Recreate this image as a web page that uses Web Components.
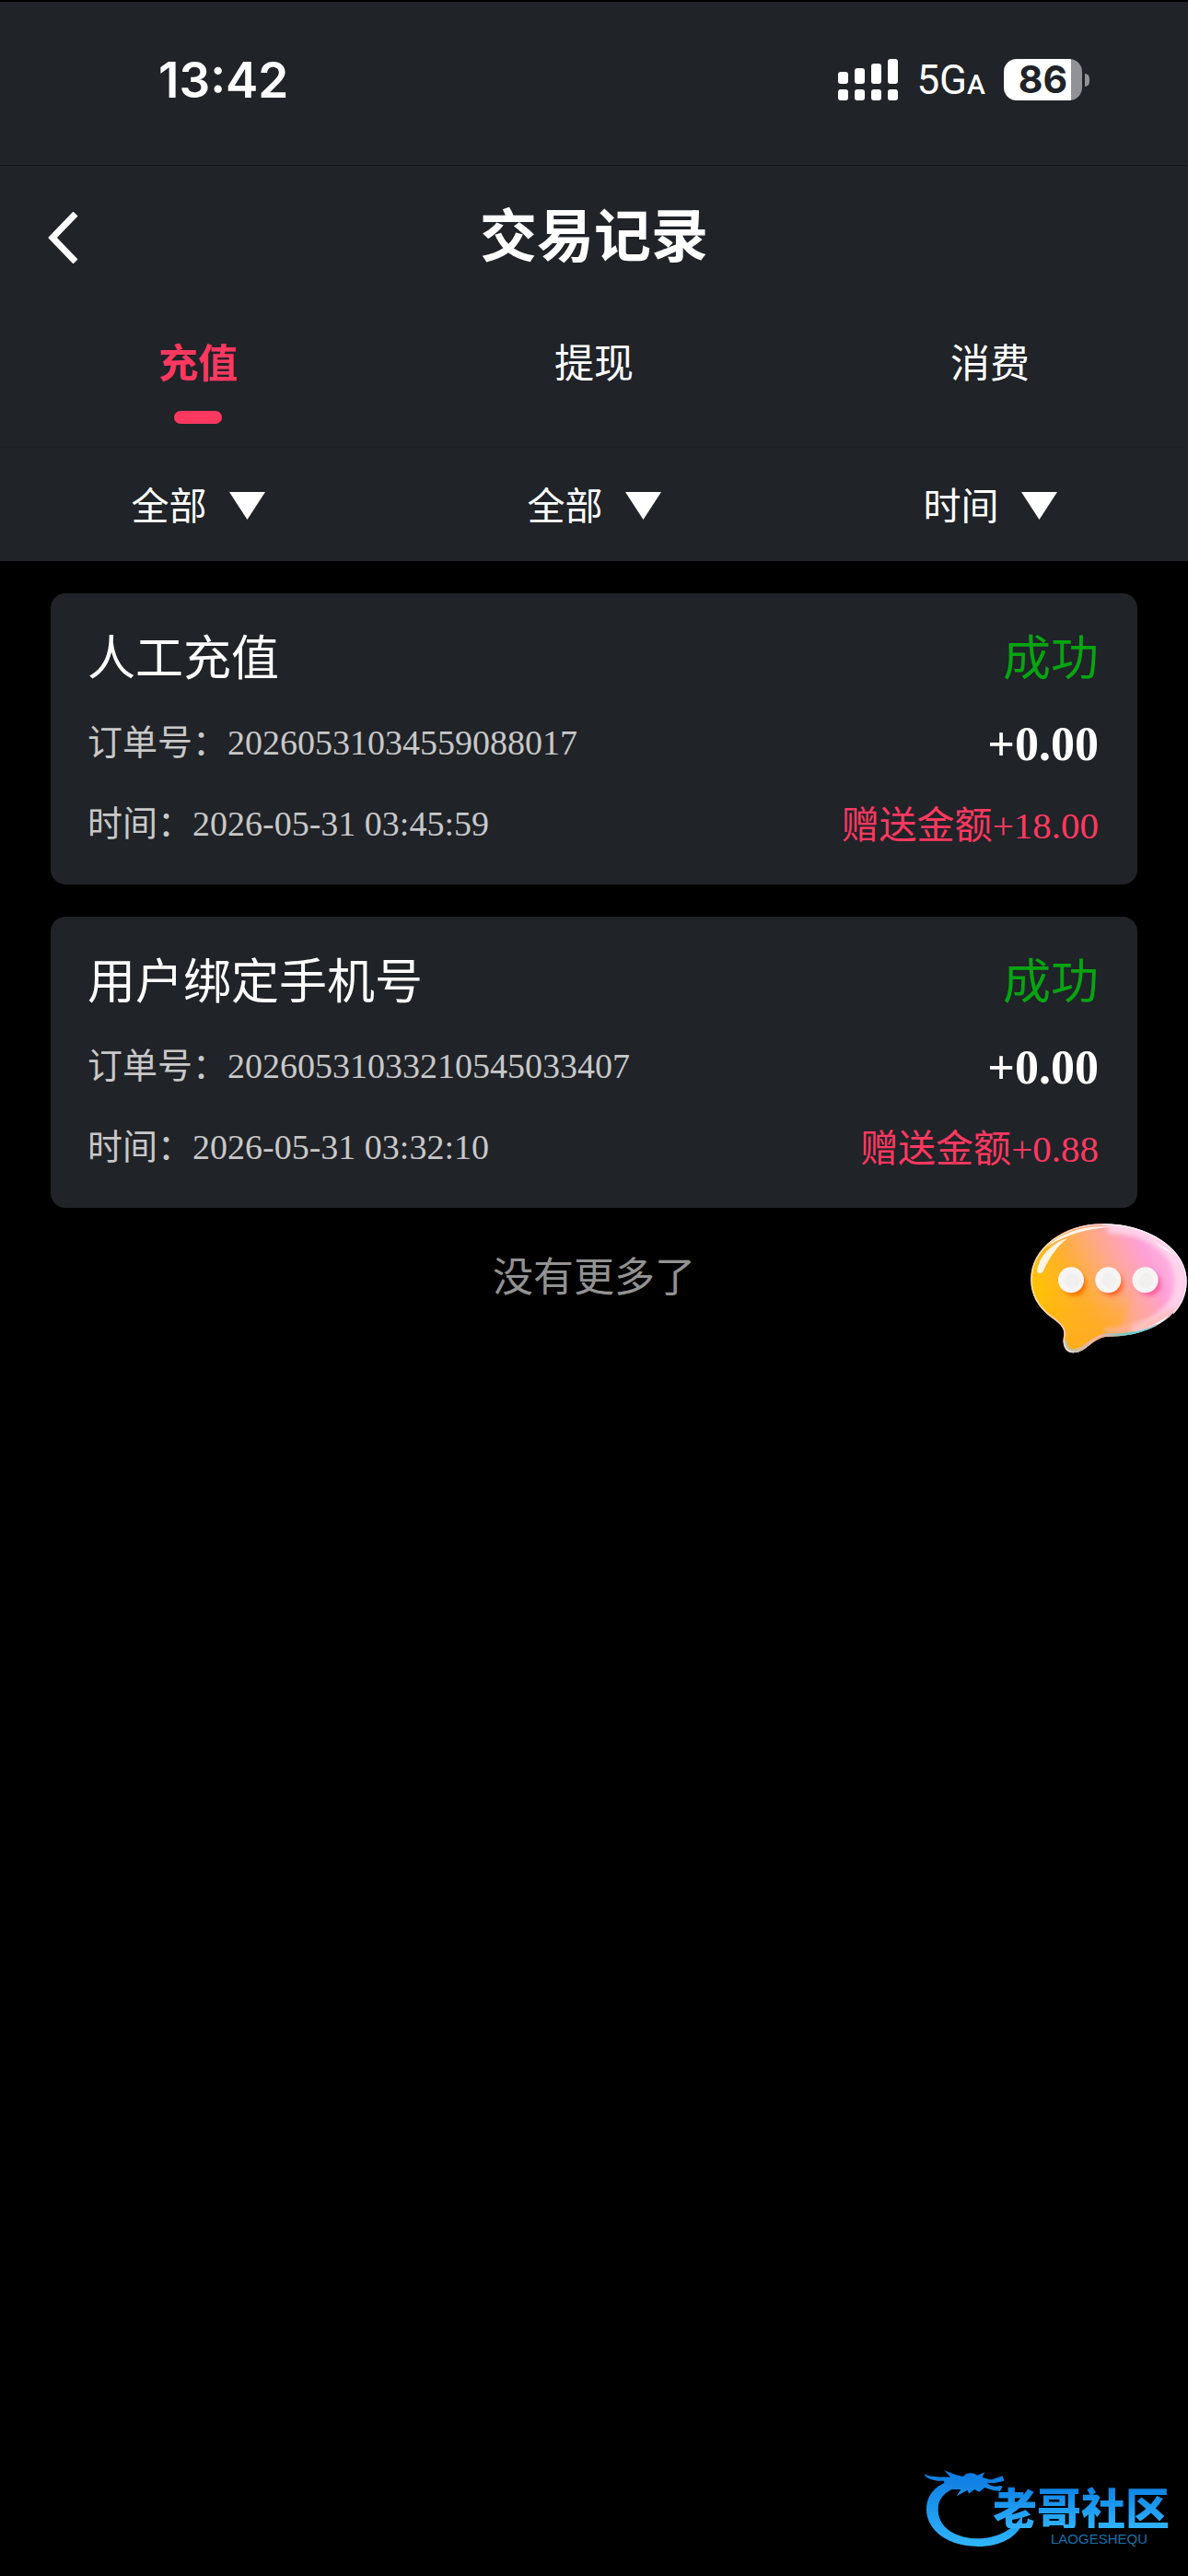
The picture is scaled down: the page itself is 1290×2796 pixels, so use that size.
<!DOCTYPE html>
<html lang="zh-CN">
<head>
<meta charset="utf-8">
<meta name="viewport" content="width=device-width, initial-scale=1">
<title>交易记录</title>
<style>
html, body {
    margin: 0;
    min-height: 100%;
    background: #000;
}
body {
    --panel: #202328;
    --accent: #ff3860;
    --success: #06a510;
    color: #fff;
    font-family: "Liberation Serif", "Noto Sans CJK SC", serif;
}
</style>
</head>
<body>

<record-page></record-page>

<script>
function define(name, html, setup) {
    const template = document.createElement("template")
    template.innerHTML = html

    customElements.define(name, class extends HTMLElement {
        constructor() {
            super()
            this.attachShadow({ mode: "open" }).append(template.content.cloneNode(true))
        }
        connectedCallback() {
            if (setup) setup(this, this.shadowRoot)
        }
    })
}

define("status-bar", /*html*/`
<style>
:host {
    display: flex;
    justify-content: space-between;
    align-items: center;
    box-sizing: border-box;
    height: 180px;
    padding: 0 107px 8px 172px;
    border-top: 2px solid #000;
    border-bottom: 1px solid #15171b;
    background: var(--panel);
    font-family: Inter, sans-serif;
}
time { font-size: 53px; font-weight: 600; }
.right { display: flex; align-items: center; }
.signal { width: 65px; height: 45px; margin-right: 20px; }
.net {
    font-family: Roboto, sans-serif;
    font-size: 44px;
    margin-right: 20px;
}
.net small { font-size: 30px; font-weight: 500; }
.battery {
    display: flex;
    align-items: center;
    justify-content: center;
    width: 85px;
    height: 45px;
    border-radius: 14px;
    background: linear-gradient(to right, #fff 73px, #909296 73px);
    color: #202328;
    font-size: 41px;
    font-weight: 700;
    line-height: 45px;
}
.nub {
    width: 5px;
    height: 14px;
    margin-left: 3px;
    border-radius: 0 7px 7px 0;
    background: #909296;
}
</style>
<time>13:42</time>
<div class="right">
  <svg class="signal" viewBox="0 0 65 45" fill="#fff" aria-hidden="true">
    <rect x="0" y="14" width="11" height="13" rx="3"/>
    <rect x="18" y="10" width="11" height="17" rx="3"/>
    <rect x="36" y="5" width="11" height="22" rx="3"/>
    <rect x="54" y="0" width="11" height="27" rx="3"/>
    <rect x="0" y="33" width="11" height="12" rx="3"/>
    <rect x="18" y="33" width="11" height="12" rx="3"/>
    <rect x="36" y="33" width="11" height="12" rx="3"/>
    <rect x="54" y="33" width="11" height="12" rx="3"/>
  </svg>
  <span class="net">5G<small>A</small></span>
  <span class="battery">86</span><span class="nub"></span>
</div>
`)

define("page-header", /*html*/`
<style>
:host {
    display: grid;
    grid-template-columns: 1fr auto 1fr;
    align-items: center;
    box-sizing: border-box;
    height: 149px;
    padding: 0 52px 6px;
    background: var(--panel);
}
button {
    justify-self: start;
    display: flex;
    padding: 12px 0 0;
    border: 0;
    background: none;
    cursor: pointer;
}
svg { width: 33px; height: 56px; }
h1 {
    margin: 0;
    font-family: "Noto Sans CJK SC", sans-serif;
    font-size: 62px;
    line-height: 88px;
    font-weight: 700;
}
</style>
<button type="button" aria-label="返回">
  <svg viewBox="0 0 33 56" fill="none" stroke="#fff" stroke-width="7"><path d="M30 2L5 28L30 54"/></svg>
</button>
<h1><slot></slot></h1>
`)

define("tab-item", /*html*/`
<style>
:host { display: block; flex: 1; }
button {
    display: flex;
    flex-direction: column;
    align-items: center;
    width: 100%;
    height: 157px;
    padding: 30px 0 0;
    border: 0;
    background: none;
    color: #fff;
    font-family: "Noto Sans CJK SC", sans-serif;
    font-size: 43px;
    line-height: 64px;
    cursor: pointer;
}
:host([active]) button { color: var(--accent); font-weight: 700; }
:host([active]) button::after {
    content: "";
    width: 52px;
    height: 14px;
    margin-top: 23px;
    border-radius: 7px;
    background: var(--accent);
}
</style>
<button type="button" role="tab"><slot></slot></button>
`, (host, root) => {
    root.querySelector("button").setAttribute("aria-selected", host.hasAttribute("active"))
})

define("filter-item", /*html*/`
<style>
:host { display: block; flex: 1; }
label {
    display: flex;
    align-items: center;
    justify-content: center;
    gap: 24px;
    box-sizing: border-box;
    height: 123px;
    padding-bottom: 4px;
}
select {
    appearance: none;
    padding: 0;
    border: 0;
    background: none;
    color: #fff;
    font-family: "Noto Sans CJK SC", sans-serif;
    font-size: 41px;
    line-height: 62px;
}
svg { width: 39px; height: 30px; padding-top: 6px; }
</style>
<label>
  <select><option></option></select>
  <svg viewBox="0 0 40 30" preserveAspectRatio="none" fill="#fff" aria-hidden="true"><path d="M0 0H40L20 30Z"/></svg>
</label>
`, (host, root) => {
    root.querySelector("select").setAttribute("aria-label", host.getAttribute("name"))
    root.querySelector("option").textContent = host.getAttribute("value")
})

define("record-card", /*html*/`
<style>
:host {
    display: grid;
    grid-template-columns: 1fr auto;
    padding: 24px 42px 20px 40px;
    border-radius: 16px;
    background: var(--panel);
    line-height: 88px;
    white-space: nowrap;
}
h2, .status {
    margin: 0 0 10px;
    font-family: "Noto Sans CJK SC", sans-serif;
    font-size: 52px;
    line-height: 86px;
    font-weight: 400;
}
.status { color: var(--success); }
.info { color: #c8c8c8; font-size: 38px; line-height: 84px; }
.amount { font-size: 52px; font-weight: 700; }
.gift { color: var(--accent); font-size: 41px; }
.status, .amount, .gift { text-align: right; }
</style>
<h2><slot></slot></h2>
<span class="status">成功</span>
<span class="info">订单号：<slot name="order"></slot></span>
<span class="amount"><slot name="amount"></slot></span>
<span class="info">时间：<slot name="time"></slot></span>
<span class="gift">赠送金额<slot name="gift"></slot></span>
`)

define("chat-bubble", /*html*/`
<style>
:host { display: block; width: 172px; height: 143px; }
button { display: block; padding: 0; border: 0; background: none; cursor: pointer; }
svg { display: block; width: 172px; height: 143px; }
</style>
<button type="button" aria-label="在线客服">
<svg viewBox="84 80 516 429">
  <defs>
    <linearGradient id="body" x1="120" y1="350" x2="540" y2="150" gradientUnits="userSpaceOnUse">
      <stop offset="0" stop-color="#ffc400"/>
      <stop offset=".28" stop-color="#ffb02c"/>
      <stop offset=".55" stop-color="#ffa88a"/>
      <stop offset=".82" stop-color="#ffa0d8"/>
      <stop offset="1" stop-color="#ffb8e4"/>
    </linearGradient>
    <linearGradient id="edge" x1="90" y1="200" x2="600" y2="330" gradientUnits="userSpaceOnUse">
      <stop offset="0" stop-color="#ffd9b0"/>
      <stop offset=".5" stop-color="#ffd0d8"/>
      <stop offset="1" stop-color="#fff0f8"/>
    </linearGradient>
    <linearGradient id="base" x1="200" y1="0" x2="560" y2="0" gradientUnits="userSpaceOnUse">
      <stop offset="0" stop-color="#a8c8b8"/>
      <stop offset=".3" stop-color="#ffb09c"/>
      <stop offset=".6" stop-color="#58ccd2"/>
      <stop offset="1" stop-color="#8adce0"/>
    </linearGradient>
    <linearGradient id="amber" x1="0" y1="290" x2="0" y2="450" gradientUnits="userSpaceOnUse">
      <stop offset="0" stop-color="#ffab20" stop-opacity="0"/>
      <stop offset="1" stop-color="#ffab20" stop-opacity=".8"/>
    </linearGradient>
    <filter id="soft" x="-40%" y="-40%" width="180%" height="180%"><feGaussianBlur stdDeviation="8"/></filter>
    <clipPath id="shape"><path d="M322 84C470 84 596 165 596 272C596 374 480 453 340 451C290 452 268 504 228 504C196 504 190 472 197 446C200 420 178 404 150 385C112 356 88 316 88 266C88 164 194 84 322 84Z"/></clipPath>
  </defs>
  <g clip-path="url(#shape)">
    <rect x="84" y="80" width="516" height="429" fill="url(#body)"/>
    <path d="M84 300H420Q400 420 340 452L230 509H84Z" fill="url(#amber)" filter="url(#soft)"/>
    <path d="M340 96C470 96 576 170 576 272C576 350 510 410 420 432" fill="none" stroke="#ffdcf0" stroke-width="38" opacity=".8" filter="url(#soft)"/>
    <path d="M330 432C420 432 500 410 550 366" fill="none" stroke="#ffb4a4" stroke-width="18" opacity=".8" filter="url(#soft)"/>
    <path d="M560 378C500 440 420 450 340 449C290 450 270 502 228 502C206 502 196 488 196 465" fill="none" stroke="url(#base)" stroke-width="18"/>
  </g>
  <path d="M322 86C470 86 594 166 594 272C594 310 580 346 552 376" fill="none" stroke="#fff0f6" stroke-width="4"/>
  <path d="M322 86C194 86 90 166 90 266C90 316 114 354 152 384C180 404 202 420 198 448C192 472 198 502 228 502" fill="none" stroke="url(#edge)" stroke-width="5"/>
  <path d="M108 240C112 192 156 146 208 131C176 155 150 190 128 240C122 247 112 248 108 240Z" fill="#fff4e4"/>
  <path d="M140 160C190 108 270 88 350 94C280 98 200 118 140 160Z" fill="#fff4e8"/>
  <path d="M492 146C520 154 540 168 552 186C534 172 514 162 492 146Z" fill="#fff" opacity=".75"/>
  <path d="M484 412C508 404 526 390 536 376C526 400 510 412 484 412Z" fill="#fff" opacity=".7"/>
  <g filter="url(#soft)">
    <circle cx="230" cy="280" r="38" fill="#ff6a00"/>
    <circle cx="351" cy="280" r="38" fill="#ff6428"/>
    <circle cx="474" cy="280" r="38" fill="#ff5c9c"/>
  </g>
  <g fill="#f6f5f4">
    <circle cx="219" cy="267" r="42"/>
    <circle cx="340" cy="267" r="42"/>
    <circle cx="461" cy="267" r="42"/>
  </g>
  <g fill="#f1f0ef">
    <circle cx="222" cy="270" r="24"/>
    <circle cx="343" cy="270" r="24"/>
    <circle cx="464" cy="270" r="24"/>
  </g>
</svg>
</button>
`)

define("site-mark", /*html*/`
<style>
:host { display: grid; width: 268px; height: 92px; }
svg, .words { grid-area: 1 / 1; }
svg { width: 108px; height: 92px; }
.words {
    justify-self: end;
    align-self: start;
    padding-top: 20px;
    font-family: "Noto Sans CJK SC", sans-serif;
    text-align: right;
}
b {
    display: block;
    font-size: 48px;
    line-height: 48px;
    font-weight: 900;
    color: transparent;
    background: linear-gradient(#0a7fe4, #2fb2fb);
    background-clip: text;
    -webkit-background-clip: text;
}
small {
    display: block;
    padding: 4px 24px 0 0;
    color: #1572ae;
    font-family: "Liberation Sans", sans-serif;
    font-size: 15px;
    line-height: 16px;
}
</style>
<svg viewBox="36 48 324 276" aria-hidden="true">
  <defs>
    <linearGradient id="blue" x1="0" y1="60" x2="0" y2="315" gradientUnits="userSpaceOnUse">
      <stop offset="0" stop-color="#0b78e0"/>
      <stop offset="1" stop-color="#30b6fc"/>
    </linearGradient>
  </defs>
  <g fill="url(#blue)">
    <path d="M122 98C70 116 46 152 48 196C52 262 120 312 216 312C290 312 344 280 361 236L360 210C330 262 270 288 206 286C134 282 88 246 86 196C84 160 104 134 150 118Z"/>
    <path d="M40 76C62 88 96 84 126 86L106 64C132 74 150 82 168 84C180 68 204 72 214 80L238 70L230 86C242 90 252 94 262 94L296 82L301 98L268 106L244 104C256 114 272 120 288 114L296 116L288 132C266 130 252 126 238 120L220 134L204 126L186 140L182 128L146 148L160 126C130 128 110 122 104 98C78 100 48 94 40 76Z"/>
  </g>
</svg>
<div class="words"><b>老哥社区</b><small>LAOGESHEQU</small></div>
`)

define("record-page", /*html*/`
<style>
:host {
    display: flex;
    flex-direction: column;
    position: relative;
    min-height: 100vh;
}
nav { display: flex; background: var(--panel); }
.tabs { border-bottom: 1px solid #1c1f23; box-sizing: border-box; height: 157px; }
main {
    display: flex;
    flex-direction: column;
    gap: 35px;
    padding: 35px 55px 0;
}
.end {
    margin: 0;
    color: #929292;
    font-family: "Noto Sans CJK SC", sans-serif;
    font-size: 44px;
    line-height: 74px;
    text-align: center;
}
chat-bubble { position: absolute; right: 0; top: 1327px; }
site-mark { margin: auto 20px 28px auto; }
</style>
<status-bar></status-bar>
<page-header>交易记录</page-header>
<nav class="tabs" role="tablist">
  <tab-item active>充值</tab-item>
  <tab-item>提现</tab-item>
  <tab-item>消费</tab-item>
</nav>
<nav>
  <filter-item name="类型" value="全部"></filter-item>
  <filter-item name="状态" value="全部"></filter-item>
  <filter-item name="日期" value="时间"></filter-item>
</nav>
<main>
  <record-card>人工充值
    <span slot="order">20260531034559088017</span>
    <span slot="amount">+0.00</span>
    <span slot="time">2026-05-31 03:45:59</span>
    <span slot="gift">+18.00</span>
  </record-card>
  <record-card>用户绑定手机号
    <span slot="order">20260531033210545033407</span>
    <span slot="amount">+0.00</span>
    <span slot="time">2026-05-31 03:32:10</span>
    <span slot="gift">+0.88</span>
  </record-card>
  <p class="end">没有更多了</p>
</main>
<chat-bubble></chat-bubble>
<site-mark></site-mark>
`)
</script>
</body>
</html>
